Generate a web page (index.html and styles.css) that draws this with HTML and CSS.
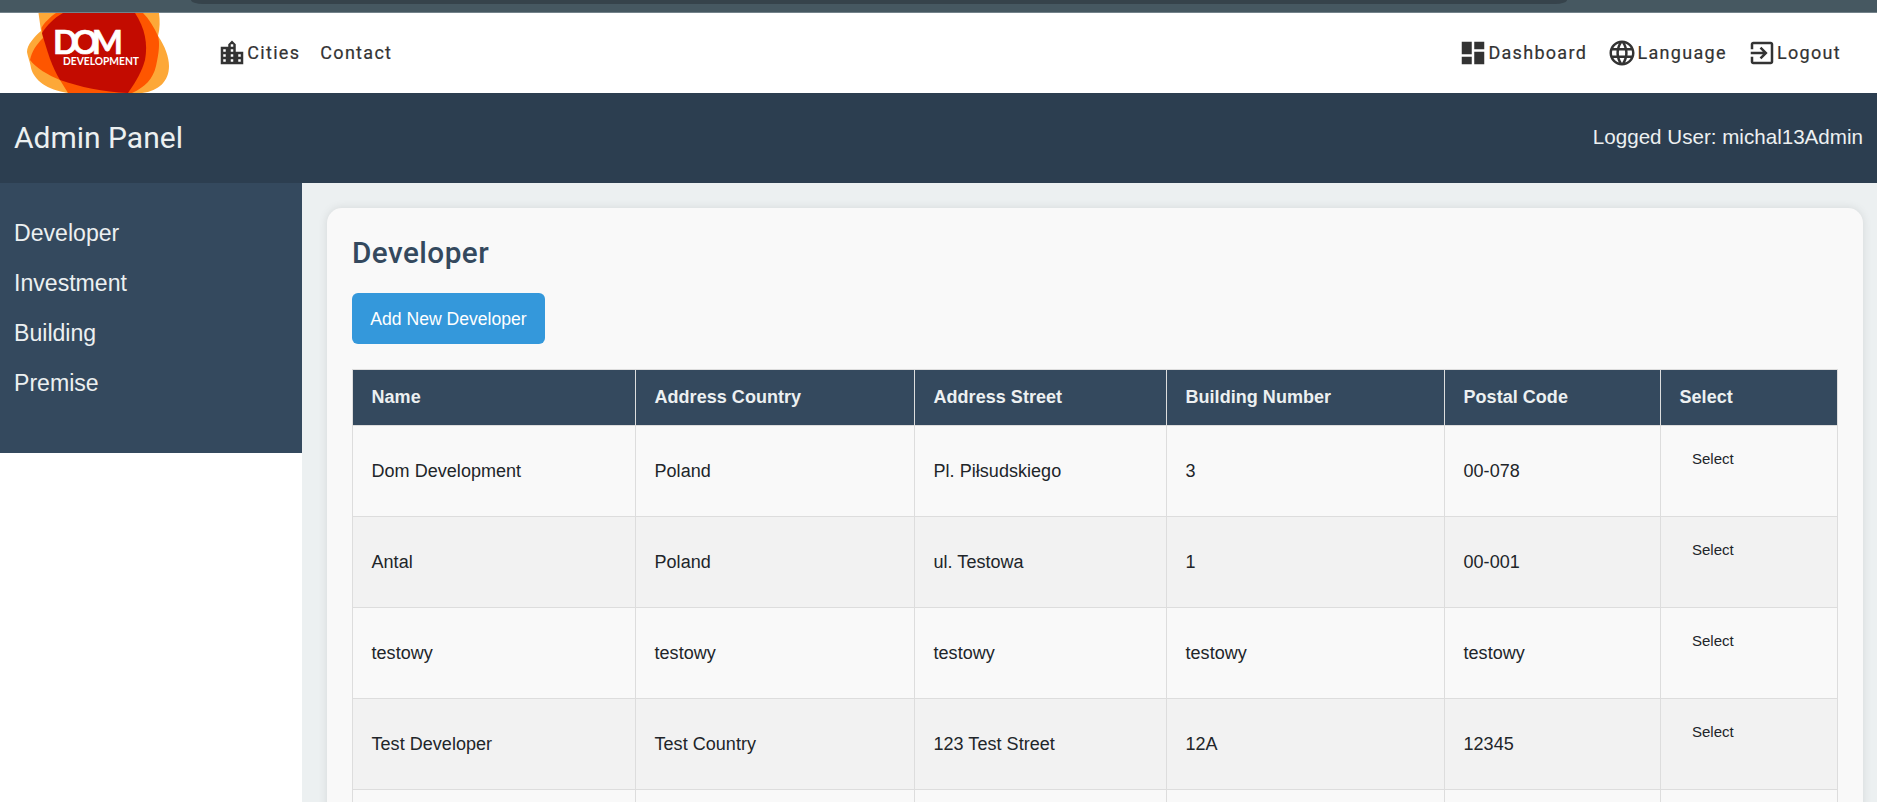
FILE: index.html
```html
<!DOCTYPE html>
<html lang="en">
<head>
<meta charset="utf-8">
<title>Admin Panel</title>
<link rel="stylesheet" href="styles.css">
</head>
<body>
<div class="chrome"><div class="chrome-field"></div></div>
<nav class="nav">
  <a class="logo">
    <svg width="160" height="80" viewBox="0 0 160 80">
      <path fill="#fda838" d="M18.500 0L21 18C14 24 7 32 7 39C8 45 10 48 11 55C14 67 27 77 48 80H122C139 78 149 68 149 53C149 44 145 33 138 23C140 15 140 8 139 0Z"/>
      <path fill="#fe5600" d="M36 0C30 4 24 10 21.500 15L23 25C16 32 12 38 10 47C16 55 28 62 40 67L48 80H112C125 74 133 66 136 53C139 40 140 30 138 23C134 14 129 6 123 0Z"/>
      <path fill="#c30b00" d="M43 0C34 5 27 12 22 20C27 38 32 54 40 67C60 74 83 79 108 80C117 67 122 58 125 47C128 31 125 15 115 0Z"/>
      <text class="logo-big" x="33" y="40.700" textLength="70">DOM</text>
      <text class="logo-small" x="43" y="52.300" textLength="76" lengthAdjust="spacingAndGlyphs">DEVELOPMENT</text>
    </svg>
  </a>
  <a class="link cities"><svg class="icon" viewBox="0 0 24 24"><path d="M15 11V5l-3-3-3 3v2H3v14h18V11h-6zm-8 8H5v-2h2v2zm0-4H5v-2h2v2zm0-4H5V9h2v2zm6 8h-2v-2h2v2zm0-4h-2v-2h2v2zm0-4h-2V9h2v2zm0-4h-2V5h2v2zm6 12h-2v-2h2v2zm0-4h-2v-2h2v2z"/></svg>Cities</a>
  <a class="link contact">Contact</a>
  <div class="nav-right">
    <a class="link"><svg class="icon" viewBox="0 0 24 24"><path d="M3 13h8V3H3v10zm0 8h8v-6H3v6zm10 0h8V11h-8v10zm0-18v6h8V3h-8z"/></svg>Dashboard</a>
    <a class="link"><svg class="icon" viewBox="0 0 24 24"><path d="M11.990 2C6.470 2 2 6.480 2 12s4.470 10 9.990 10C17.520 22 22 17.520 22 12S17.520 2 11.990 2zm6.930 6h-2.950c-.32-1.250-.78-2.450-1.380-3.560 1.840.63 3.370 1.910 4.330 3.560zM12 4.040c.83 1.200 1.480 2.530 1.910 3.960h-3.820c.43-1.430 1.080-2.760 1.910-3.960zM4.260 14C4.100 13.360 4 12.690 4 12s.1-1.360.26-2h3.380c-.08.66-.14 1.320-.14 2s.06 1.340.14 2H4.260zm.82 2h2.950c.32 1.250.78 2.450 1.380 3.560-1.840-.63-3.370-1.900-4.330-3.560zm2.950-8H5.080c.96-1.660 2.490-2.930 4.330-3.560C8.810 5.550 8.350 6.750 8.030 8zM12 19.960c-.83-1.200-1.480-2.530-1.910-3.960h3.820c-.43 1.430-1.080 2.760-1.910 3.960zM14.340 14H9.660c-.09-.66-.16-1.320-.16-2s.07-1.350.16-2h4.680c.09.65.16 1.320.16 2s-.07 1.340-.16 2zm.25 5.560c.6-1.110 1.060-2.310 1.380-3.560h2.950c-.96 1.650-2.490 2.930-4.330 3.560zM16.360 14c.08-.66.14-1.320.14-2s-.06-1.340-.14-2h3.380c.16.64.26 1.310.26 2s-.1 1.360-.26 2h-3.380z"/></svg>Language</a>
    <a class="link"><svg class="icon" viewBox="0 0 24 24"><path d="M10.090 15.590L11.500 17l5-5-5-5-1.410 1.410L12.670 11H3v2h9.670l-2.580 2.590zM19 3H5c-1.110 0-2 .9-2 2v4h2V5h14v14H5v-4H3v4c0 1.100.89 2 2 2h14c1.100 0 2-.9 2-2V5c0-1.100-.9-2-2-2z"/></svg>Logout</a>
  </div>
</nav>
<header class="header">
  <h1>Admin Panel</h1>
  <span class="user">Logged User: michal13Admin</span>
</header>
<div class="layout">
  <aside class="sidebar">
    <a>Developer</a><a>Investment</a><a>Building</a><a>Premise</a>
  </aside>
  <main class="content">
    <section class="card">
      <h2>Developer</h2>
      <button class="add">Add New Developer</button>
      <table>
        <colgroup><col class="c1"><col class="c2"><col class="c3"><col class="c4"><col class="c5"><col class="c6"></colgroup>
        <thead><tr><th>Name</th><th>Address Country</th><th>Address Street</th><th>Building Number</th><th>Postal Code</th><th>Select</th></tr></thead>
        <tbody>
          <tr><td>Dom Development</td><td>Poland</td><td>Pl. Piłsudskiego</td><td>3</td><td>00-078</td><td class="pick"><button>Select</button></td></tr>
          <tr><td>Antal</td><td>Poland</td><td>ul. Testowa</td><td>1</td><td>00-001</td><td class="pick"><button>Select</button></td></tr>
          <tr><td>testowy</td><td>testowy</td><td>testowy</td><td>testowy</td><td>testowy</td><td class="pick"><button>Select</button></td></tr>
          <tr><td>Test Developer</td><td>Test Country</td><td>123 Test Street</td><td>12A</td><td>12345</td><td class="pick"><button>Select</button></td></tr>
          <tr><td></td><td></td><td></td><td></td><td></td><td></td></tr>
        </tbody>
      </table>
    </section>
  </main>
</div>
</body>
</html>
```
FILE: styles.css
```css
* { box-sizing: border-box; }
body {
  margin: 0;
  height: 802px;
  overflow: hidden;
  background: #fff;
  color: #212529;
  font-family: "Liberation Sans", Arial, sans-serif;
  font-size: 18px;
}
h1, h2 { margin: 0; font-family: Roboto, sans-serif; }

.chrome { height: 13px; background: #465861; border-bottom: 1px solid #73828a; }
.chrome-field { height: 4px; margin: 0 310px 0 191px; background: #36434b; border-radius: 0 0 12px 12px / 0 0 4px 4px; }

.nav { display: flex; align-items: center; height: 80px; padding: 0 36px 0 20px; }
.logo { display: block; height: 80px; }
.logo svg { display: block; }
.logo-big { font: 700 33px Lato, sans-serif; fill: #fff; stroke: #fff; stroke-width: .6px; }
.logo-small { font: 700 11px Lato, sans-serif; fill: #fff; }
.link {
  display: flex;
  align-items: center;
  height: 30px;
  padding-bottom: 1px;
  color: #333;
  font: 400 18px/28px Roboto, sans-serif;
  letter-spacing: 1.3px;
  -webkit-text-stroke: .2px #333;
}
.icon { width: 30px; height: 30px; margin-right: .3px; fill: #333; }
.cities { margin-left: 37px; }
.contact { margin-left: 20px; }
.nav-right { display: flex; gap: 20px; margin-left: auto; }

.header {
  display: flex;
  align-items: center;
  justify-content: space-between;
  height: 90px;
  padding: 0 14px 2px;
  background: #2c3e50;
  color: #ecf0f1;
}
.header h1 { font-size: 30px; font-weight: 400; }
.user { font-size: 20.6px; }

.layout { display: flex; align-items: flex-start; }
.sidebar { display: flex; flex: none; flex-direction: column; width: 302px; height: 270px; padding: 25px 14px; background: #34495e; }
.sidebar a { height: 50px; line-height: 50px; color: #ecf0f1; font-size: 23.1px; }
.content { flex: 1; min-width: 0; height: 619px; padding: 25px 14px 0 25px; overflow: hidden; background: #ecf0f1; }
.card { height: 700px; padding: 25px; border-radius: 15px; background: #f9f9f9; box-shadow: 0 0 10px rgba(0, 0, 0, .1); }
.card h2 { height: 60px; line-height: 40px; color: #34495e; font-size: 29.7px; font-weight: 500; letter-spacing: .45px; }
button { border: 0; font-family: inherit; }
.add { display: block; width: 193px; height: 51px; padding: 1px 0 0; border-radius: 6px; background: #3498db; color: #fff; font-size: 17.6px; }

table { width: 1486px; margin-top: 25px; border-collapse: collapse; table-layout: fixed; letter-spacing: .04px; }
.c1 { width: 283px; }
.c2 { width: 279px; }
.c3 { width: 252px; }
.c4 { width: 278px; }
.c5 { width: 216px; }
.c6 { width: 177px; }
th, td { border: 1px solid #ddd; padding: 0 18px 0 18.500px; text-align: left; }
th { height: 56px; background: #34495e; color: #ecf0f1; }
td { height: 91px; }
tbody tr:nth-child(even) { background: #f2f2f2; }
.pick { padding-top: 24px; vertical-align: top; }
.pick button { display: block; padding: 0 12.500px; background: none; color: #212529; font-size: 15px; line-height: 18px; }
```
